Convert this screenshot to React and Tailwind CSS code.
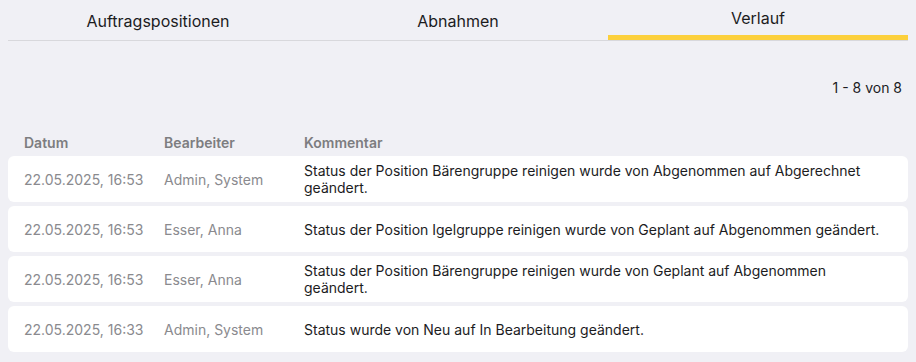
import React from 'react';

const tabs = ['Auftragspositionen', 'Abnahmen', 'Verlauf'];

const rows = [
  {
    date: '22.05.2025, 16:53',
    user: 'Admin, System',
    text: 'Status der Position Bärengruppe reinigen wurde von Abgenommen auf Abgerechnet geändert.',
  },
  {
    date: '22.05.2025, 16:53',
    user: 'Esser, Anna',
    text: 'Status der Position Igelgruppe reinigen wurde von Geplant auf Abgenommen geändert.',
  },
  {
    date: '22.05.2025, 16:53',
    user: 'Esser, Anna',
    text: 'Status der Position Bärengruppe reinigen wurde von Geplant auf Abgenommen geändert.',
  },
  {
    date: '22.05.2025, 16:33',
    user: 'Admin, System',
    text: 'Status wurde von Neu auf In Bearbeitung geändert.',
  },
];

const App = () => {
  const active = 2;

  return (
    <div className="min-h-[362px] w-full bg-[#f0f0f5] px-2 font-['Inter',sans-serif] text-[#1c1c1e]">
      {/* Tabs */}
      <div className="flex h-[41px] border-b border-[#d8d8dc]">
        {tabs.map((t, i) => (
          <div key={t} className="flex h-10 flex-1 flex-col">
            <div className="flex flex-1 items-center justify-center pt-[1px] text-[16px]">{t}</div>
            {i === active && <div className="h-[5px] bg-[#fcd03c]" />}
          </div>
        ))}
      </div>

      {/* Pagination */}
      <div className="flex justify-end pt-[37px] pr-[6px] text-[14px] leading-[20px]">1 - 8 von 8</div>

      {/* Table header */}
      <div className="mt-[36px] flex px-4 text-[14px] font-semibold leading-[17px] text-[#7d7d80]">
        <div className="w-[140px]">Datum</div>
        <div className="w-[140px]">Bearbeiter</div>
        <div className="flex-1">Kommentar</div>
      </div>

      {/* Rows */}
      <div className="mt-[5px] flex flex-col gap-1">
        {rows.map((r, i) => (
          <div key={i} className="flex h-[46px] items-center rounded-md bg-white px-4 text-[14px] leading-[17px]">
            <div className="w-[140px] text-[#8a8a8e]">{r.date}</div>
            <div className="w-[140px] text-[#8a8a8e]">{r.user}</div>
            <div className="flex-1">{r.text}</div>
          </div>
        ))}
      </div>
    </div>
  );
};

export default App;
